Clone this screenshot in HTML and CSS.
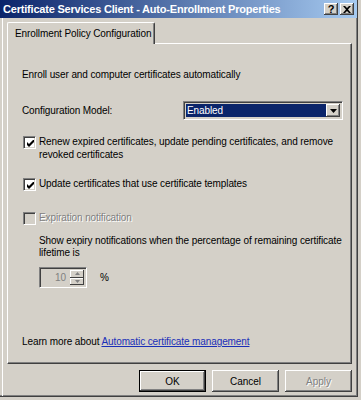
FILE: index.html
```html
<!DOCTYPE html>
<html>
<head>
    <title>Certificate Services Client - Auto-Enrollment Properties</title>
    <link rel="stylesheet" href="styles.css">
</head>
<body>
    <div class="window">
        <div class="titlebar">
            <span class="title">Certificate Services Client - Auto-Enrollment Properties</span>
            <span class="caption-btn">?</span>
            <span class="caption-btn close">
                <svg width="8" height="7" viewBox="0 0 8 7"><path d="M0 0h2l2 2 2-2h2L5 3.5 8 7H6L4 5 2 7H0l3-3.5z" fill="#000"/></svg>
            </span>
        </div>
        <div class="content">
            <div class="tabs">
                <div class="tab active">Enrollment Policy Configuration</div>
            </div>
            <div class="panel">
                <p class="intro">Enroll user and computer certificates automatically</p>

                <div class="field-row">
                    <label class="field-label">Configuration Model:</label>
                    <div class="select">
                        <span class="select-value">Enabled</span>
                        <span class="select-arrow">
                            <svg width="7" height="4" viewBox="0 0 7 4"><path d="M0 0h7L3.5 4z" fill="#000"/></svg>
                        </span>
                    </div>
                </div>

                <div class="check-row first">
                    <span class="checkbox checked">
                        <svg width="7" height="7" viewBox="0 0 7 7"><path d="M0 2v3l2 2 5-5V-1L2 4z" fill="#000"/></svg>
                    </span>
                    <span class="check-label">Renew expired certificates, update pending certificates, and remove<br>revoked certificates</span>
                </div>

                <div class="check-row second">
                    <span class="checkbox checked">
                        <svg width="7" height="7" viewBox="0 0 7 7"><path d="M0 2v3l2 2 5-5V-1L2 4z" fill="#000"/></svg>
                    </span>
                    <span class="check-label">Update certificates that use certificate templates</span>
                </div>

                <div class="check-row disabled">
                    <span class="checkbox"></span>
                    <span class="check-label">Expiration notification</span>
                </div>

                <div class="sub">
                    <p class="expiry-text">Show expiry notifications when the percentage of remaining certificate<br>lifetime is</p>
                    <div class="spin-row">
                        <div class="spin">
                            <span class="spin-value">10</span>
                            <span class="spin-btns">
                                <span class="spin-btn"><svg width="5" height="3" viewBox="0 0 5 3"><path d="M2.5 0L5 3H0z" fill="#808080"/></svg></span>
                                <span class="spin-btn"><svg width="5" height="3" viewBox="0 0 5 3"><path d="M0 0h5L2.5 3z" fill="#808080"/></svg></span>
                            </span>
                        </div>
                        <span class="percent">%</span>
                    </div>
                </div>

                <p class="learn">Learn more about <a href="#">Automatic certificate management</a></p>
            </div>
            <div class="buttons">
                <button type="button" class="btn default">OK</button>
                <button type="button" class="btn">Cancel</button>
                <button type="button" class="btn" disabled>Apply</button>
            </div>
        </div>
    </div>
</body>
</html>
```

FILE: styles.css
```css
body {
    margin: 0;
    background: #d4d0c8;
    font-family: "Liberation Sans", Arial, sans-serif;
    font-size: 10px;
    letter-spacing: -0.1px;
    color: #000;
}
.window {
    width: 357px;
    height: 396px;
    background: #d4d0c8;
    border-right: 1px solid #404040;
    border-bottom: 1px solid #404040;
    box-shadow: inset -1px -1px 0 #808080;
}
.titlebar {
    height: 18px;
    display: flex;
    align-items: center;
    padding: 0 3px 0 3px;
    background: linear-gradient(to right, #0a246a, #a6caf0);
}
.title {
    flex: 1;
    color: #fff;
    font-weight: bold;
    font-size: 11px;
    letter-spacing: -0.2px;
    white-space: nowrap;
}
.caption-btn {
    width: 14px;
    height: 12px;
    margin-left: 2px;
    background: #d4d0c8;
    box-shadow: inset -1px -1px 0 #404040, inset 1px 1px 0 #fff, inset -2px -2px 0 #808080;
    display: flex;
    align-items: center;
    justify-content: center;
    font-weight: bold;
    font-size: 11px;
    line-height: 12px;
}
.content {
    padding: 5px 5px 0 4px;
    border-left: 1px solid #fff;
    margin-left: 2px;
    height: 373px;
}
.tabs {
    display: flex;
    height: 20px;
}
.tab {
    height: 21px;
    line-height: 21px;
    padding: 0 3px 0 7px;
    white-space: nowrap;
    background: #d4d0c8;
    border-top: 1px solid #fff;
    border-left: 1px solid #fff;
    border-right: 1px solid #404040;
    box-shadow: inset -1px 0 0 #808080;
    border-radius: 2px 2px 0 0;
    position: relative;
    z-index: 1;
    margin-top: -1px;
}
.panel {
    border-top: 1px solid #fff;
    border-left: 1px solid #fff;
    border-right: 1px solid #404040;
    border-bottom: 1px solid #404040;
    box-shadow: inset -1px -1px 0 #808080;
    padding: 0 6px 0 14px;
    box-sizing: border-box;
    height: 321px;
    display: flex;
    flex-direction: column;
}
.intro {
    margin: 24px 0 0 0;
    line-height: 13px;
}
.field-row {
    display: flex;
    align-items: center;
    margin-top: 20px;
    height: 19px;
}
.field-label {
    width: 161px;
}
.select {
    width: 160px;
    height: 19px;
    box-sizing: border-box;
    border-top: 1px solid #808080;
    border-left: 1px solid #808080;
    border-right: 1px solid #fff;
    border-bottom: 1px solid #fff;
    box-shadow: inset 1px 1px 0 #404040, inset -1px -1px 0 #d4d0c8;
    display: flex;
    padding: 2px;
}
.select-value {
    flex: 1;
    background: #0a246a;
    color: #fff;
    line-height: 13px;
    padding-left: 1px;
}
.select-arrow {
    width: 14px;
    background: #d4d0c8;
    box-shadow: inset -1px -1px 0 #404040, inset 1px 1px 0 #fff, inset -2px -2px 0 #808080;
    display: flex;
    align-items: center;
    justify-content: center;
}
.check-row {
    display: flex;
    align-items: flex-start;
    margin-top: 20px;
    line-height: 13px;
}
.check-row.first {
    margin-top: 15px;
}
.check-row.second {
    margin-top: 16px;
}
.check-label {
    white-space: nowrap;
}
.checkbox {
    flex: none;
    width: 13px;
    height: 13px;
    box-sizing: border-box;
    background: #fff;
    border-top: 1px solid #808080;
    border-left: 1px solid #808080;
    border-right: 1px solid #fff;
    border-bottom: 1px solid #fff;
    box-shadow: inset 1px 1px 0 #404040, inset -1px -1px 0 #d4d0c8;
    display: flex;
    align-items: center;
    justify-content: center;
    margin: 1px 3px 0 1px;
}
.checkbox svg {
    margin: 1px 0 0 1px;
}
.disabled .checkbox {
    background: #d4d0c8;
}
.disabled .check-label {
    color: #808080;
    text-shadow: 1px 1px 0 #fff;
}
.sub {
    padding-left: 17px;
}
.expiry-text {
    margin: 10px 0 0 0;
    line-height: 12px;
    white-space: nowrap;
}
.spin-row {
    display: flex;
    align-items: center;
    margin-top: 8px;
}
.spin {
    width: 48px;
    height: 21px;
    box-sizing: border-box;
    border-top: 1px solid #808080;
    border-left: 1px solid #808080;
    border-right: 1px solid #fff;
    border-bottom: 1px solid #fff;
    box-shadow: inset 1px 1px 0 #404040, inset -1px -1px 0 #d4d0c8;
    display: flex;
    padding: 2px;
}
.spin-value {
    flex: 1;
    text-align: right;
    color: #808080;
    line-height: 15px;
    padding-right: 4px;
}
.spin-btns {
    width: 14px;
    display: flex;
    flex-direction: column;
}
.spin-btn {
    flex: 1;
    background: #d4d0c8;
    box-shadow: inset -1px -1px 0 #404040, inset 1px 1px 0 #fff;
    display: flex;
    align-items: center;
    justify-content: center;
}
.percent {
    margin-left: 13px;
}
.learn {
    margin: auto 0 15px 0;
    line-height: 13px;
}
.learn a {
    color: #1a2fb8;
}
.buttons {
    display: flex;
    justify-content: flex-end;
    gap: 6px;
    margin-top: 6px;
}
.btn {
    width: 67px;
    height: 22px;
    font-family: "Liberation Sans", Arial, sans-serif;
    font-size: 10px;
    background: #d4d0c8;
    border: none;
    box-shadow: inset -1px -1px 0 #404040, inset 1px 1px 0 #fff, inset -2px -2px 0 #808080;
    padding: 0;
    color: #000;
}
.btn.default {
    border: 1px solid #000;
}
.btn:disabled {
    color: #808080;
    text-shadow: 1px 1px 0 #fff;
}
```
